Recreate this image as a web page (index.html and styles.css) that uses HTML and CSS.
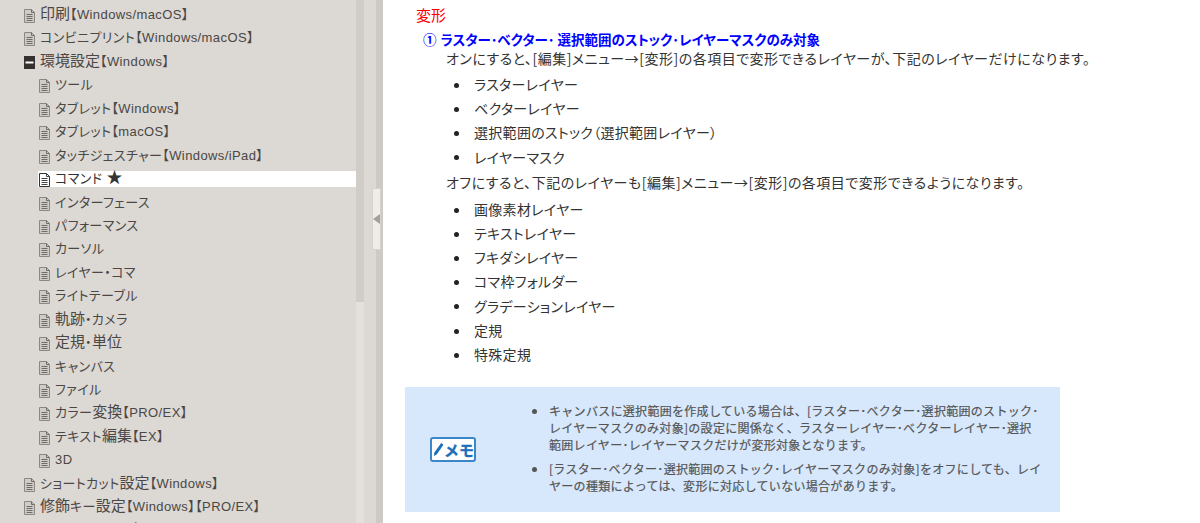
FILE: index.html
```html
<!DOCTYPE html>
<html lang="ja">
<head>
<meta charset="utf-8">
<title>環境設定</title>
<link rel="stylesheet" href="styles.css">
</head>
<body>
<div class="app">
  <nav class="side">
    <div class="tree">
      <a class="row"><svg class="doc"><use href="#doc"/></svg><span><span class="kj">印刷</span>【Windows/macOS】</span></a>
      <a class="row"><svg class="doc"><use href="#doc"/></svg><span>コンビニプリント【Windows/macOS】</span></a>
      <a class="row"><svg class="doc"><use href="#minus"/></svg><span><span class="kj">環境設定</span>【Windows】</span></a>
      <a class="row sub"><svg class="doc"><use href="#doc"/></svg><span>ツール</span></a>
      <a class="row sub"><svg class="doc"><use href="#doc"/></svg><span>タブレット【Windows】</span></a>
      <a class="row sub"><svg class="doc"><use href="#doc"/></svg><span>タブレット【macOS】</span></a>
      <a class="row sub"><svg class="doc"><use href="#doc"/></svg><span>タッチジェスチャー【Windows/iPad】</span></a>
      <a class="row sub active"><svg class="doc"><use href="#docactive"/></svg><span>コマンド <span class="star">★</span></span></a>
      <a class="row sub"><svg class="doc"><use href="#doc"/></svg><span>インターフェース</span></a>
      <a class="row sub"><svg class="doc"><use href="#doc"/></svg><span>パフォーマンス</span></a>
      <a class="row sub"><svg class="doc"><use href="#doc"/></svg><span>カーソル</span></a>
      <a class="row sub"><svg class="doc"><use href="#doc"/></svg><span>レイヤー・コマ</span></a>
      <a class="row sub"><svg class="doc"><use href="#doc"/></svg><span>ライトテーブル</span></a>
      <a class="row sub"><svg class="doc"><use href="#doc"/></svg><span><span class="kj">軌跡</span>・カメラ</span></a>
      <a class="row sub"><svg class="doc"><use href="#doc"/></svg><span><span class="kj">定規</span>・<span class="kj">単位</span></span></a>
      <a class="row sub"><svg class="doc"><use href="#doc"/></svg><span>キャンバス</span></a>
      <a class="row sub"><svg class="doc"><use href="#doc"/></svg><span>ファイル</span></a>
      <a class="row sub"><svg class="doc"><use href="#doc"/></svg><span>カラー<span class="kj">変換</span>【PRO/EX】</span></a>
      <a class="row sub"><svg class="doc"><use href="#doc"/></svg><span>テキスト<span class="kj">編集</span>【EX】</span></a>
      <a class="row sub"><svg class="doc"><use href="#doc"/></svg><span>3D</span></a>
      <a class="row"><svg class="doc"><use href="#doc"/></svg><span>ショートカット<span class="kj">設定</span>【Windows】</span></a>
      <a class="row"><svg class="doc"><use href="#doc"/></svg><span><span class="kj">修飾</span>キー<span class="kj">設定</span>【Windows】【PRO/EX】</span></a>
      <a class="row"><svg class="doc"><use href="#doc"/></svg><span>コマンドバー<span class="kj">設定</span>【Windows】【PRO/EX】</span></a>
    </div>
    <div class="scroll"><div class="thumb"></div></div>
  </nav>
  <div class="split"><div class="handle"><i class="arrow"></i></div></div>
  <main class="content">
    <h2 class="title">変形</h2>
    <h3 class="opt"><span class="num">①</span>ラスター･ベクター･ 選択範囲のストック･レイヤーマスクのみ対象</h3>
    <p class="para">オンにすると、[編集]メニュー→[変形]の各項目で変形できるレイヤーが、下記のレイヤーだけになります。</p>
    <ul class="list first">
      <li>ラスターレイヤー</li>
      <li>ベクターレイヤー</li>
      <li>選択範囲のストック（選択範囲レイヤー）</li>
      <li>レイヤーマスク</li>
    </ul>
    <p class="para">オフにすると、下記のレイヤーも[編集]メニュー→[変形]の各項目で変形できるようになります。</p>
    <ul class="list">
      <li>画像素材レイヤー</li>
      <li>テキストレイヤー</li>
      <li>フキダシレイヤー</li>
      <li>コマ枠フォルダー</li>
      <li>グラデーションレイヤー</li>
      <li>定規</li>
      <li>特殊定規</li>
    </ul>
    <div class="memo">
      <div class="badge"><svg class="pen" viewBox="0 0 12 16"><path d="M9 1l2.4 1.8L4 13.4 1 15l.5-3.6z"/></svg><span>メモ</span></div>
      <ul class="notes">
        <li>キャンバスに選択範囲を作成している場合は、[ラスター･ベクター･選択範囲のストック･<br>レイヤーマスクのみ対象]の設定に関係なく、ラスターレイヤー･ベクターレイヤー･選択<br>範囲レイヤー･レイヤーマスクだけが変形対象となります。</li>
        <li>[ラスター･ベクター･選択範囲のストック･レイヤーマスクのみ対象]をオフにしても、レイ<br>ヤーの種類によっては、変形に対応していない場合があります。</li>
      </ul>
    </div>
  </main>
</div>
<svg class="defs" width="0" height="0">
  <symbol id="doc" viewBox="0 0 11 14">
    <path d="M.5.5h7l3 3v10H.5z" fill="#cfccc8" stroke="#8b8783"/>
    <path d="M7.5.5v3h3M2.5 5.5h6M2.5 7.5h6M2.5 9.5h6M2.5 11.5h6" fill="none" stroke="#6f6b67"/>
  </symbol>
  <symbol id="docactive" viewBox="0 0 11 14">
    <path d="M.5.5h7l3 3v10H.5z" fill="#fff" stroke="#333"/>
    <path d="M7.5.5v3h3M2.5 5.5h6M2.5 7.5h6M2.5 9.5h6M2.5 11.5h6" fill="none" stroke="#444"/>
  </symbol>
  <symbol id="minus" viewBox="0 0 11 14">
    <rect x="-1" y="0" width="13" height="13" rx="1.5" fill="#33302e"/>
    <rect x="1.5" y="5.5" width="8" height="2" fill="#fff"/>
  </symbol>
</svg>
</body>
</html>
```
FILE: styles.css
```css
html, body { margin: 0; height: 100%; overflow: hidden; background: #fff; }
.app { display: flex; height: 523px; overflow: hidden; font-family: "Liberation Sans", "Noto Sans CJK JP", sans-serif; font-feature-settings: "palt"; }
.side { display: flex; width: 372px; flex: none; background: #dcd8d4; }
.tree { display: flex; flex-direction: column; gap: 7.45px; width: 356px; flex: none; padding-top: 7px; }
.row { display: flex; gap: 5px; flex: none; height: 16px; margin-left: 24px; font-size: 13px; line-height: 16px; letter-spacing: .4px; color: #4a4744; white-space: nowrap; }
.row.sub { margin-left: 38px; padding-left: 1px; }
.row.active { background: #fff; color: #333; }
.kj { font-size: 15px; line-height: 14px; letter-spacing: 0; }
.star { font-size: 16px; line-height: 14px; }
.doc { width: 11px; height: 14px; margin-top: 2px; flex: none; overflow: visible; }
.scroll { width: 8px; background: #e4e1dd; }
.thumb { height: 302px; background: #d0cdc9; }
.split { width: 11px; flex: none; background: #dcd8d4; box-shadow: inset -7px 0 0 #cdcac6; }
.handle { display: flex; align-items: center; width: 9px; height: 62px; margin-top: 188px; background: #f0ede9; border: 1px solid #d6d3cf; box-sizing: border-box; }
.arrow { width: 0; height: 0; border: 5px solid transparent; border-left: 0; border-right: 7px solid #a59f98; }
.content { flex: 1; padding: 4px 0 0 22px; font-family: "Noto Sans CJK JP", "Liberation Sans", sans-serif; font-size: 14px; color: #333; min-width: 0; }
.title { margin: 0 0 0 11px; font-size: 15px; line-height: 21px; font-weight: 400; color: #f00; }
.opt { margin: 4px 0 0 18px; font-size: 13.5px; line-height: 20px; font-weight: 700; color: #00f; }
.num { margin-right: 4px; }
.para { margin: -1px 0 0 41px; line-height: 20px; letter-spacing: .5px; }
.list { margin: 5px 0 3px; padding: 0 0 0 69px; letter-spacing: .3px; list-style: none; }
.list.first { margin: 4px 0; }
.list li { line-height: 24.2px; }
.list li::before { content: ""; display: inline-block; width: 5px; height: 5px; margin: 0 15px 2px -20px; border-radius: 50%; background: #222; vertical-align: middle; }
.memo { display: flex; align-items: center; width: 655px; height: 125px; margin-top: 21px; background: #d7e8fc; }
.badge { display: flex; align-items: center; width: 46px; height: 25px; margin-left: 25px; padding-left: 1px; flex: none; background: #fff; border: 2px solid #3c87c8; border-radius: 3px; color: #1b6fba; font-size: 15px; font-weight: 700; line-height: 1; box-sizing: border-box; white-space: nowrap; overflow: hidden; font-feature-settings: normal; -webkit-text-stroke: .3px #1b6fba; }
.pen { width: 11px; height: 17px; fill: #1b6fba; flex: none; }
.notes { margin: 0; padding: 0 0 4px 73px; font-size: 12px; line-height: 17px; letter-spacing: .3px; color: #555; font-feature-settings: normal; white-space: nowrap; -webkit-text-stroke: .2px #555; list-style: none; }
.notes li { margin-bottom: 7px; }
.notes li:last-child { margin-bottom: 0; }
.notes li::before { content: ""; display: inline-block; width: 5px; height: 5px; margin: 0 12px 2px -17px; border-radius: 50%; background: #555; vertical-align: middle; }
.defs { position: absolute; }
```
